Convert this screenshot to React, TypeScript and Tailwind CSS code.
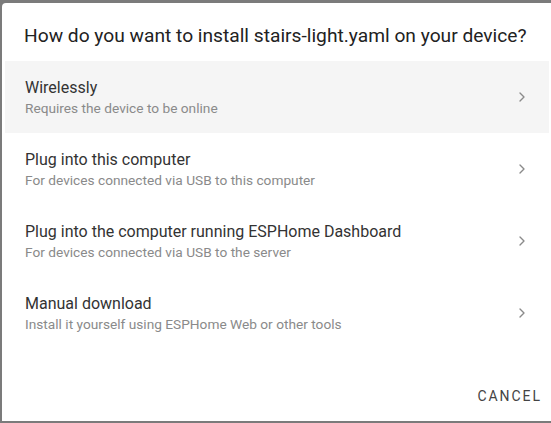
import { ChevronRight } from 'lucide-react';

const options = [
  { title: 'Wirelessly', sub: 'Requires the device to be online', active: true },
  { title: 'Plug into this computer', sub: 'For devices connected via USB to this computer' },
  { title: 'Plug into the computer running ESPHome Dashboard', sub: 'For devices connected via USB to the server' },
  { title: 'Manual download', sub: 'Install it yourself using ESPHome Web or other tools' },
];

export default function App() {
  return (
    <div
      className="h-[423px] w-[551px] overflow-hidden bg-[#7b7b7b] pl-[2px] pt-[3px] pb-[2px]"
      style={{ fontFamily: 'Roboto, "Liberation Sans", sans-serif' }}
    >
      <div className="flex h-full w-[600px] flex-col rounded-tl-[4px] bg-white">
        <h2 className="px-[22px] pt-[23px] pb-[15px] text-[19.2px] leading-[20px] text-[#222]">
          How do you want to install stairs-light.yaml on your device?
        </h2>

        <div className="flex flex-col">
          {options.map((o) => (
            <div
              key={o.title}
              className={
                'ml-[3px] flex h-[72px] w-[544px] items-center justify-between pl-[20px] pr-[19px] ' +
                (o.active ? 'bg-[#f5f5f5]' : '')
              }
            >
              <div className="flex flex-col pt-[1px]">
                <span className="text-[16px] leading-[20px] text-[#333]">{o.title}</span>
                <span className="text-[13.7px] leading-[20px] text-[#8a8a8a]">{o.sub}</span>
              </div>
              <ChevronRight size={16} strokeWidth={2} className="text-[#8a8a8a]" />
            </div>
          ))}
        </div>

        <div className="mt-auto flex w-[549px] justify-end pb-[17px] pr-[7px]">
          <button className="px-[2px] text-[14px] font-normal leading-[16px] tracking-[0.14em] text-[#444]">
            CANCEL
          </button>
        </div>
      </div>
    </div>
  );
}
